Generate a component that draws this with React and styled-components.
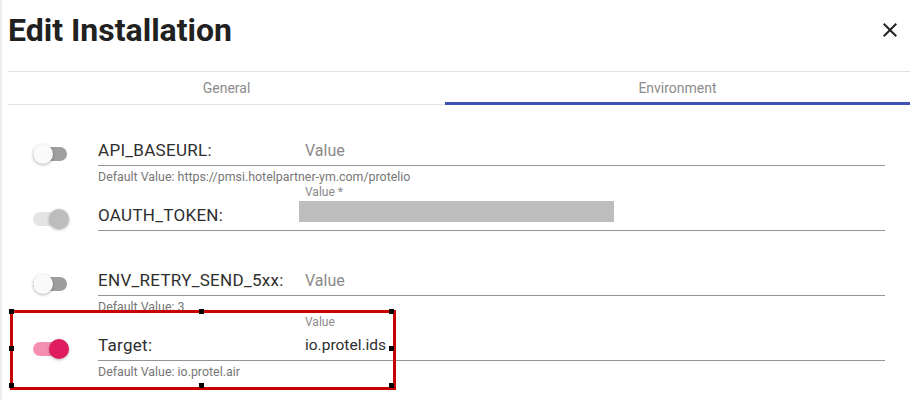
import styled, { createGlobalStyle } from "styled-components";

const GlobalStyle = createGlobalStyle`
  body {
    margin: 0;
    background: #fff;
    font-family: Roboto, "Liberation Sans", Arial, sans-serif;
  }
`;

const envRows = [
  { key: "API_BASEURL:", placeholder: "Value", helper: "Default Value: https://pmsi.hotelpartner-ym.com/protelio", state: "off" },
  { key: "OAUTH_TOKEN:", label: "Value *", redacted: true, state: "disabled" },
  { key: "ENV_RETRY_SEND_5xx:", placeholder: "Value", helper: "Default Value: 3", state: "off" },
  { key: "Target:", label: "Value", value: "io.protel.ids", helper: "Default Value: io.protel.air", state: "on", selected: true },
];

function Toggle({ state }) {
  return (
    <Track $state={state}>
      <Thumb $state={state} />
    </Track>
  );
}

function Selection() {
  const spots = [
    [0, 0], [50, 0], [100, 0],
    [0, 50], [100, 50],
    [0, 100], [50, 100], [100, 100],
  ];
  return (
    <SelectBox>
      {spots.map(([x, y]) => (
        <Handle key={`${x}-${y}`} style={{ left: `${x}%`, top: `${y}%` }} />
      ))}
    </SelectBox>
  );
}

export default function App() {
  return (
    <Page>
      <GlobalStyle />
      <Header>
        <Title>Edit Installation</Title>
        <CloseBtn aria-label="close">
          <svg viewBox="0 0 24 24" width="24" height="24">
            <path
              fill="currentColor"
              d="M19 6.41L17.59 5 12 10.59 6.41 5 5 6.41 10.59 12 5 17.59 6.41 19 12 13.41 17.59 19 19 17.59 13.41 12z"
            />
          </svg>
        </CloseBtn>
      </Header>

      <TabBar>
        <Tab>General</Tab>
        <Tab $active>Environment</Tab>
      </TabBar>

      <Rows>
        {envRows.map((row) => (
          <Row key={row.key}>
            <ToggleCell>
              <Toggle state={row.state} />
            </ToggleCell>
            <Field>
              <SmallLabel>{row.label}</SmallLabel>
              <InputLine>
                <KeyName>{row.key}</KeyName>
                <ValueCell>
                  {row.value && <ValueText>{row.value}</ValueText>}
                  {row.placeholder && <Placeholder>{row.placeholder}</Placeholder>}
                  {row.redacted && <Redaction />}
                </ValueCell>
              </InputLine>
              <Helper>{row.helper}</Helper>
            </Field>
            {row.selected && <Selection />}
          </Row>
        ))}
      </Rows>
    </Page>
  );
}

const Page = styled.div`
  min-height: 400px;
  box-sizing: border-box;
  border-left: 2px solid #ececec;
  padding-left: 6px;
`;

const Header = styled.div`
  display: flex;
  align-items: center;
  justify-content: space-between;
  padding: 11px 13px 22px 0;
`;

const Title = styled.h2`
  margin: 0;
  font-size: 32px;
  line-height: 38px;
  font-weight: 700;
  color: #212121;
`;

const CloseBtn = styled.button`
  display: flex;
  padding: 0;
  border: 0;
  background: none;
  color: #222;
  cursor: pointer;
`;

const TabBar = styled.div`
  display: grid;
  grid-template-columns: 437px 465px;
  border-top: 1px solid #e0e0e0;
  border-bottom: 1px solid #e0e0e0;
  width: 902px;
`;

const Tab = styled.div`
  position: relative;
  height: 32px;
  display: flex;
  align-items: center;
  justify-content: center;
  font-size: 14px;
  color: #8c8c8c;

  &::after {
    content: "";
    display: ${(p) => (p.$active ? "block" : "none")};
    position: absolute;
    left: 0;
    right: 0;
    bottom: -1px;
    height: 3px;
    background: #3f51b5;
  }
`;

const Rows = styled.div`
  padding: 14px 30px 0 0;
`;

const Row = styled.div`
  position: relative;
  display: grid;
  grid-template-columns: 90px 1fr;
  height: 65px;
`;

const ToggleCell = styled.div`
  padding: 25px 0 0 25px;
`;

const Track = styled.div`
  position: relative;
  width: 34px;
  height: 14px;
  margin-top: 3px;
  border-radius: 7px;
  background: ${(p) =>
    p.$state === "on" ? "#f48fb1" : p.$state === "disabled" ? "#e4e4e4" : "#9e9e9e"};
`;

const Thumb = styled.div`
  position: absolute;
  top: -3px;
  left: ${(p) => (p.$state === "off" ? "0" : "16px")};
  width: 20px;
  height: 20px;
  border-radius: 50%;
  background: ${(p) =>
    p.$state === "on" ? "#e01b5f" : p.$state === "disabled" ? "#bdbdbd" : "#fafafa"};
  box-shadow: 0 1px 3px rgba(0, 0, 0, 0.3);
`;

const Field = styled.div`
  display: flex;
  flex-direction: column;
`;

const SmallLabel = styled.div`
  height: 16px;
  line-height: 16px;
  padding-left: 207px;
  font-size: 12px;
  color: #8a8a8a;
`;

const InputLine = styled.div`
  display: flex;
  align-items: center;
  height: 30px;
  border-bottom: 1px solid #949494;
  font-size: 16px;
`;

const KeyName = styled.div`
  width: 207px;
  flex-shrink: 0;
  font-size: 17px;
  letter-spacing: 0.3px;
  color: #2e2e2e;
`;

const ValueCell = styled.div`
  position: relative;
  flex: 1;
  height: 100%;
  display: flex;
  align-items: center;
`;

const ValueText = styled.span`
  font-size: 15.5px;
  color: #2e2e2e;
`;

const Placeholder = styled.span`
  color: #8a8a8a;
`;

const Redaction = styled.div`
  position: absolute;
  left: -6px;
  top: 1px;
  width: 315px;
  height: 21px;
  background: #bdbdbd;
`;

const Helper = styled.div`
  margin-top: 4px;
  height: 14px;
  line-height: 14px;
  font-size: 12.4px;
  color: #777;
  white-space: nowrap;
`;

const SelectBox = styled.div`
  position: absolute;
  left: 2px;
  top: -4px;
  width: 386px;
  height: 80px;
  box-sizing: border-box;
  border: 3px solid #c80000;
  pointer-events: none;
`;

const Handle = styled.span`
  position: absolute;
  width: 5px;
  height: 5px;
  margin: -4px 0 0 -4px;
  background: #000;
`;
